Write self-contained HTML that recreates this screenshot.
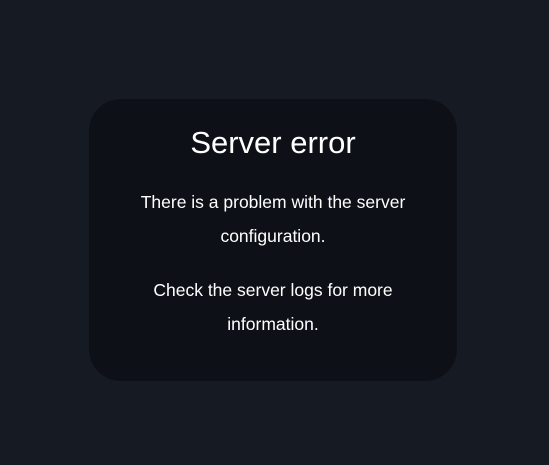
<!DOCTYPE html>
<html><head><style>
html,body{margin:0;padding:0;width:549px;height:465px;background:#161a22;overflow:hidden;font-family:"Liberation Sans",sans-serif;color:#fff}
.card{position:absolute;left:89px;top:99px;width:368px;height:282px;background:#0d1017;border-radius:32px;text-align:center}
h1{position:absolute;left:0;right:0;top:24px;margin:0;font-weight:normal;font-size:31px;line-height:40px}
p{position:absolute;left:30px;right:30px;margin:0;font-size:17.5px;line-height:34px}
</style></head><body>
<div class="card">
<h1>Server error</h1>
<p style="top:86px">There is a problem with the server configuration.</p>
<p style="top:174px">Check the server logs for more information.</p>
</div>
</body></html>
